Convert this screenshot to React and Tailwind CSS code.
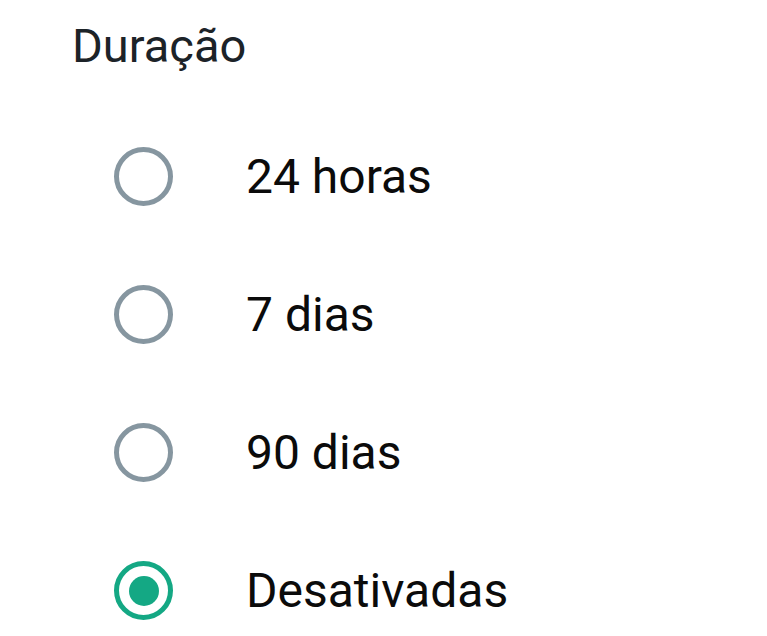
import React, { useState } from 'react'

const OPTIONS = ['24 horas', '7 dias', '90 dias', 'Desativadas']

function Radio({ checked }) {
  return (
    <div
      className={`w-[59px] h-[59px] rounded-full border-[5px] flex items-center justify-center shrink-0 ${
        checked ? 'border-[#14a884]' : 'border-[#8696a0]'
      }`}
    >
      {checked && <div className="w-[30px] h-[30px] rounded-full bg-[#14a884]" />}
    </div>
  )
}

export default function App() {
  const [value, setValue] = useState('Desativadas')

  return (
    <div className="w-[767px] h-[636px] bg-white overflow-hidden" style={{ fontFamily: 'Roboto, "Noto Sans", sans-serif' }}>
      <div className="pl-[72px] pt-[20px] text-[47px] leading-[52px] text-[#1c2328]">Duração</div>
      <div className="mt-[75px] flex flex-col gap-[79px]">
        {OPTIONS.map(opt => (
          <div key={opt} className="flex items-center h-[59px] pl-[114px] cursor-pointer" onClick={() => setValue(opt)}>
            <Radio checked={value === opt} />
            <span className="ml-[73px] text-[48px] leading-[59px] text-[#0b0b0b]">{opt}</span>
          </div>
        ))}
      </div>
    </div>
  )
}
